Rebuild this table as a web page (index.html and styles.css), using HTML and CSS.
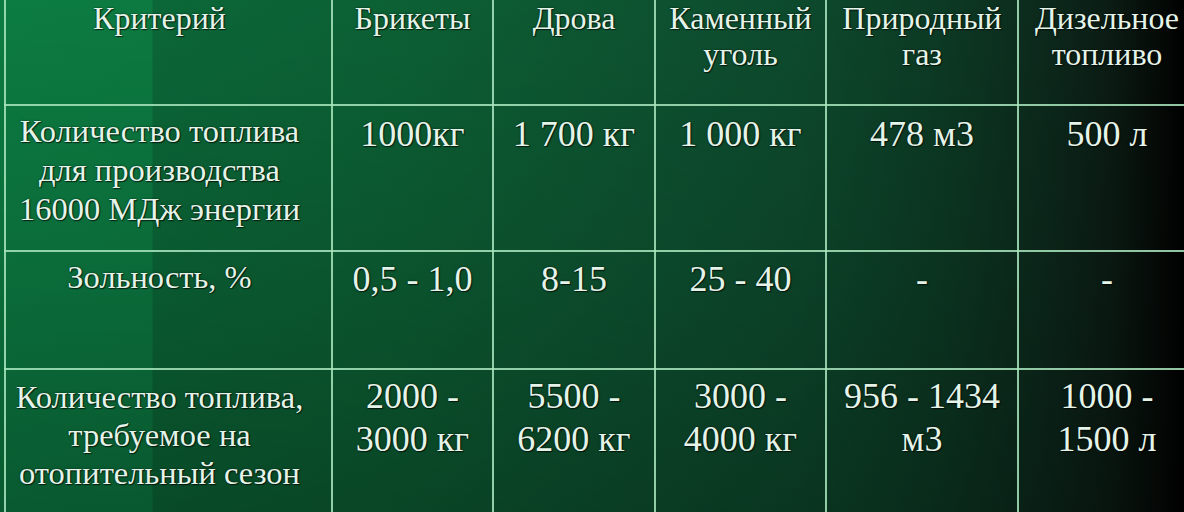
FILE: index.html
```html
<!DOCTYPE html>
<html lang="ru">
<head>
<meta charset="utf-8">
<title>Сравнение видов топлива</title>
<link rel="stylesheet" href="styles.css">
</head>
<body>
<div class="board">
<table class="fuel">
  <colgroup>
    <col class="c-crit">
    <col class="c-brik">
    <col class="c-drov">
    <col class="c-coal">
    <col class="c-gas">
    <col class="c-dies">
  </colgroup>
  <thead>
    <tr class="r-head">
      <th class="first">Критерий</th>
      <th>Брикеты</th>
      <th>Дрова</th>
      <th>Каменный<br>уголь</th>
      <th>Природный<br>газ</th>
      <th>Дизельное<br>топливо</th>
    </tr>
  </thead>
  <tbody>
    <tr class="r-one">
      <td class="label first">Количество топлива<br>для производства<br>16000 МДж энергии</td>
      <td class="num">1000кг</td>
      <td class="num">1 700 кг</td>
      <td class="num">1 000 кг</td>
      <td class="num">478 м3</td>
      <td class="num">500 л</td>
    </tr>
    <tr class="r-two">
      <td class="label first">Зольность, %</td>
      <td class="num">0,5 - 1,0</td>
      <td class="num">8-15</td>
      <td class="num">25 - 40</td>
      <td class="num">-</td>
      <td class="num">-</td>
    </tr>
    <tr class="r-three">
      <td class="label first">Количество топлива,<br>требуемое на<br>отопительный сезон</td>
      <td class="num">2000 -<br>3000 кг</td>
      <td class="num">5500 -<br>6200 кг</td>
      <td class="num">3000 -<br>4000 кг</td>
      <td class="num">956 - 1434<br>м3</td>
      <td class="num">1000 -<br>1500 л</td>
    </tr>
  </tbody>
</table>
</div>
</body>
</html>
```

FILE: styles.css
```css
html, body {
  margin: 0;
  padding: 0;
  width: 1184px;
  height: 512px;
  overflow: hidden;
  background: #000;
}

.board {
  width: 1184px;
  height: 512px;
  overflow: hidden;
  background:
    linear-gradient(to bottom, rgba(0,0,0,0) 0%, rgba(0,0,0,0.12) 50%, rgba(0,0,0,0.28) 100%),
    linear-gradient(to right,
      #0c7c42 0px, #0c7a41 152px,
      #0b6737 153px, #0c6034 400px,
      #0d5431 620px, #0d4a2d 800px,
      #0c3a24 940px, #0c2a1c 1040px,
      #0b1c14 1110px, #050a07 1160px, #000 1184px);
  font-family: "Liberation Serif", Tinos, "Times New Roman", serif;
  color: #e4f4e8;
}

.fuel {
  border-collapse: collapse;
  table-layout: fixed;
  margin-left: 4px;
  width: 1190px;
}

.c-crit { width: 327px; }
.c-brik { width: 161px; }
.c-drov { width: 162px; }
.c-coal { width: 171px; }
.c-gas  { width: 192px; }
.c-dies { width: 177px; }

.fuel th,
.fuel td {
  border: 2px solid rgba(170, 230, 190, 0.85);
  border-top: none;
  text-align: center;
  vertical-align: top;
  font-weight: normal;
  padding: 0;
  box-sizing: border-box;
  white-space: nowrap;
  text-shadow: 0 0 2px rgba(0,0,0,0.7), 1px 1px 1px rgba(0,0,0,0.6);
}

.fuel tbody td { border-top: 2px solid rgba(170, 230, 190, 0.85); }

.fuel th:last-child,
.fuel td:last-child { border-right: none; }

.fuel .first { padding-right: 18px; }

.r-head th {
  height: 105px;
  font-size: 32px;
  line-height: 36px;
  padding-top: 0;
}

.label { font-size: 32.5px; }
.num { font-size: 36px; }

.r-one td { height: 146px; }
.r-one .label { line-height: 39px; padding-top: 6px; }
.r-one .num { line-height: 40px; padding-top: 8px; }

.r-two td { height: 118px; }
.r-two .label { line-height: 39px; padding-top: 6px; }
.r-two .num { line-height: 40px; padding-top: 7px; }

.r-three td { height: 150px; }
.r-three .label { line-height: 38px; padding-top: 8px; }
.r-three .num { line-height: 43px; padding-top: 5px; }
```
